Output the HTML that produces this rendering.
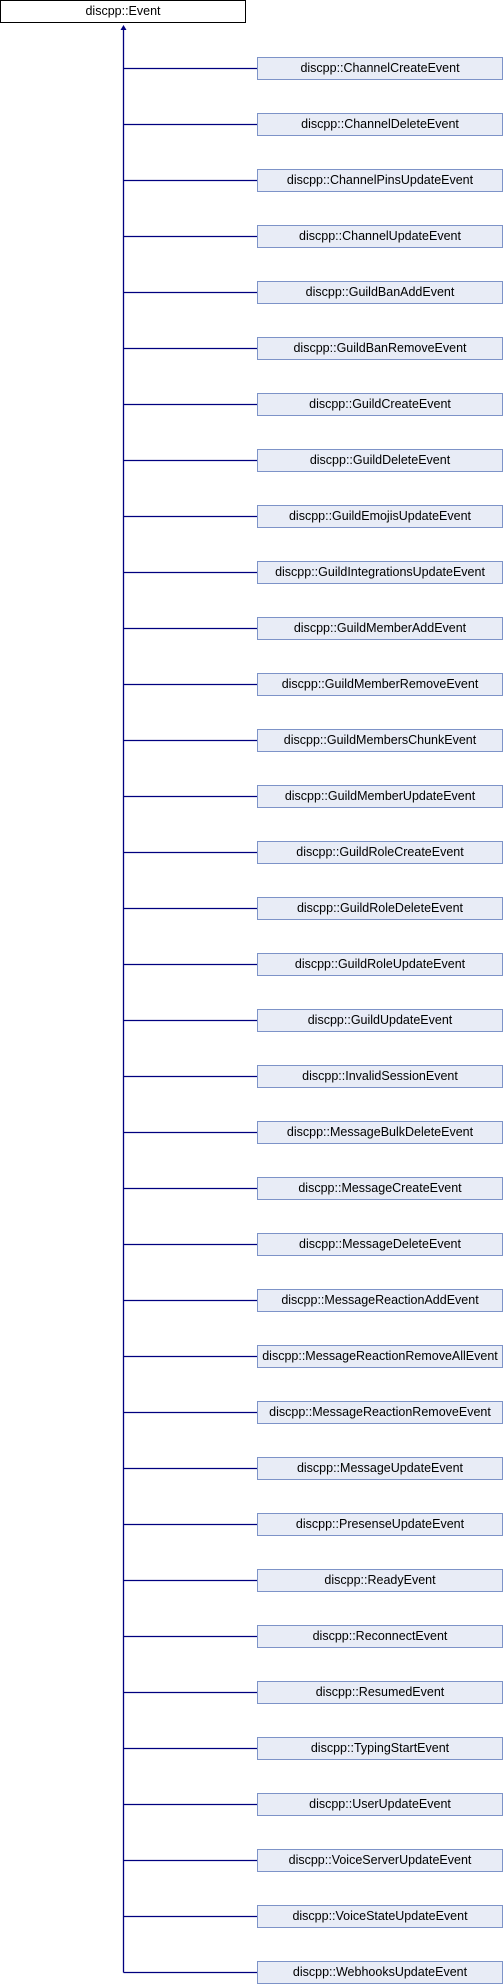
<!DOCTYPE html>
<html><head><style>
body{margin:0;width:504px;height:1984px;background:#fff;position:relative;overflow:hidden;font-family:"Liberation Sans",Arial,sans-serif;font-size:12.5px}
.b{position:absolute;left:257px;width:244px;height:21px;background:#e8ecf6;border:1px solid #7d93c8;text-align:center;line-height:21px;color:#000;white-space:nowrap}
.t{position:absolute;left:0;top:0;width:244px;height:21px;border:1px solid #000;background:#fff;text-align:center;line-height:21px}
</style></head><body>
<svg width="504" height="1984" style="position:absolute;left:0;top:0">
<g stroke="#00007f" stroke-width="1.3" fill="none" id="g"></g>
<polygon points="123.5,25 120.5,30 126.5,30" fill="#00007f"/>
</svg>
<div class="t">discpp::Event</div>
<div id="c"></div>
<script>
var n=["ChannelCreateEvent","ChannelDeleteEvent","ChannelPinsUpdateEvent","ChannelUpdateEvent","GuildBanAddEvent","GuildBanRemoveEvent","GuildCreateEvent","GuildDeleteEvent","GuildEmojisUpdateEvent","GuildIntegrationsUpdateEvent","GuildMemberAddEvent","GuildMemberRemoveEvent","GuildMembersChunkEvent","GuildMemberUpdateEvent","GuildRoleCreateEvent","GuildRoleDeleteEvent","GuildRoleUpdateEvent","GuildUpdateEvent","InvalidSessionEvent","MessageBulkDeleteEvent","MessageCreateEvent","MessageDeleteEvent","MessageReactionAddEvent","MessageReactionRemoveAllEvent","MessageReactionRemoveEvent","MessageUpdateEvent","PresenseUpdateEvent","ReadyEvent","ReconnectEvent","ResumedEvent","TypingStartEvent","UserUpdateEvent","VoiceServerUpdateEvent","VoiceStateUpdateEvent","WebhooksUpdateEvent"];
var h='',s='<line x1="123.5" y1="29" x2="123.5" y2="1972.5"/>';
for(var i=0;i<n.length;i++){var y=57+56*i;h+='<div class="b" style="top:'+y+'px">discpp::'+n[i]+'</div>';s+='<line x1="123.5" y1="'+(y+11.5)+'" x2="257" y2="'+(y+11.5)+'"/>';}
document.getElementById('c').innerHTML=h;document.getElementById('g').innerHTML=s;
</script>
</body></html>
